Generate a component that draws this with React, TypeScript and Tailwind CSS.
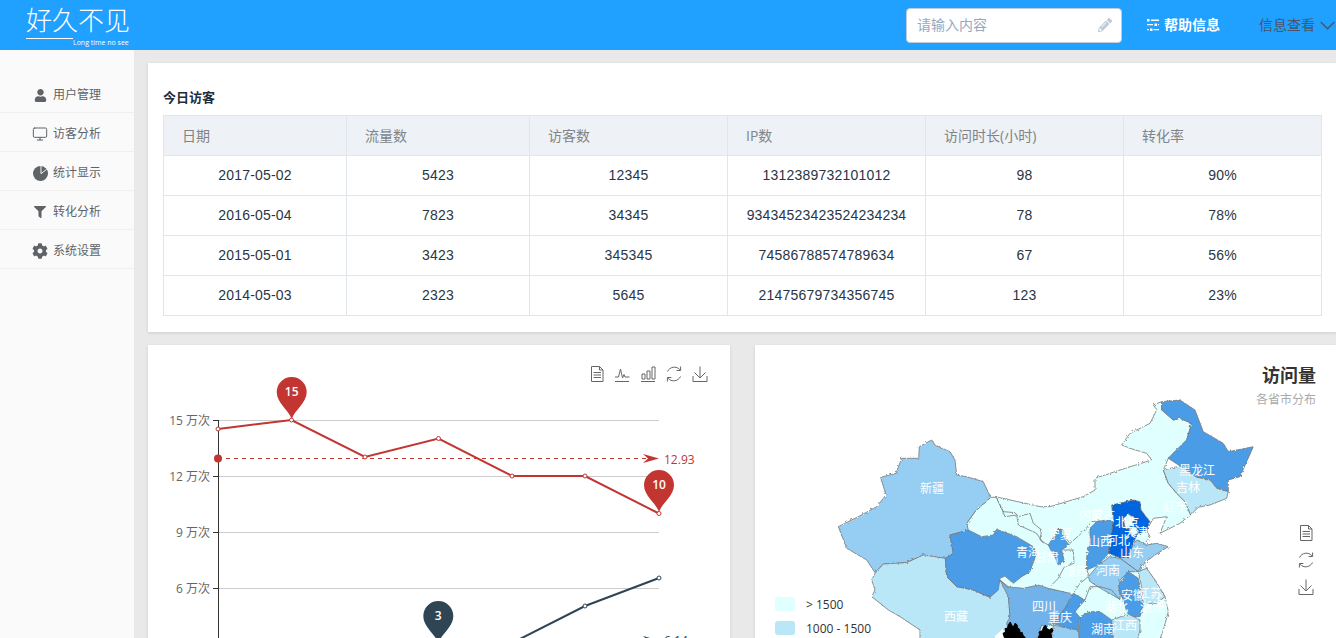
import { FaUser, FaFilter, FaCog, FaPencilAlt } from "react-icons/fa";
import { Monitor } from "lucide-react";

const CJK = "font-['Open_Sans','Noto_Sans_CJK_SC',sans-serif]";

const MENU = [
  { label: "用户管理", icon: <FaUser size={13} /> },
  { label: "访客分析", icon: <Monitor size={16} strokeWidth={1.5} /> },
  {
    label: "统计显示",
    icon: (
      <svg width="15" height="15" viewBox="0 0 16 16">
        <circle cx="8" cy="8" r="8" fill="currentColor" />
        <path d="M8.5 0V8.2L14.5 3.5" fill="none" stroke="#fafafa" strokeWidth="1" />
      </svg>
    ),
  },
  { label: "转化分析", icon: <FaFilter size={12} /> },
  { label: "系统设置", icon: <FaCog size={16} /> },
];

const COLS = [183, 183, 198, 198, 198, 198];
const HEAD = ["日期", "流量数", "访客数", "IP数", "访问时长(小时)", "转化率"];
const ROWS = [
  ["2017-05-02", "5423", "12345", "1312389732101012", "98", "90%"],
  ["2016-05-04", "7823", "34345", "93434523423524234234", "78", "78%"],
  ["2015-05-01", "3423", "345345", "74586788574789634", "67", "56%"],
  ["2014-05-03", "2323", "5645", "21475679734356745", "123", "23%"],
];

function Tool({ kind, x, y }: { kind: string; x: number; y: number }) {
  const c = { fill: "none", stroke: "#666", strokeWidth: 1 };
  return (
    <g transform={`translate(${x - 8} ${y - 8})`} {...c}>
      {kind === "doc" && (
        <>
          <path d="M2.5 0.5h8l3.5 3.5V15.5H2.5z" />
          <path d="M10.5 0.5v3.5H14M4.5 6.5h7.5M4.5 9h7.5M4.5 11.5h7.5" />
        </>
      )}
      {kind === "line" && <path d="M1 15.5h14M1 11h3.5l2-8 2 9 1.5-3.5 1 2.5h4.5" />}
      {kind === "bar" && (
        <path d="M1 15.5h14M2 13V8h3v5zM7 13V5h3v8zM12 13V1h3v12z" />
      )}
      {kind === "refresh" && (
        <>
          <path d="M1.5 5.5A7.5 7.5 0 0 1 14 3.8M14.5 10.5A7.5 7.5 0 0 1 2 12.2" />
          <path d="M14.6 0.5v4h-4M1.4 15.5v-4h4" />
        </>
      )}
      {kind === "save" && (
        <path d="M8 0.5v11.5M2.5 6.5L8 12l5.5-5.5M1 10v5.5h14V10" />
      )}
    </g>
  );
}

function Pin({ x, y, color, label }: { x: number; y: number; color: string; label: string }) {
  return (
    <g>
      <path
        d={`M${x} ${y + 27} C${x - 3} ${y + 18} ${x - 15} ${y + 11} ${x - 15} ${y} A15 15 0 1 1 ${x + 15} ${y} C${x + 15} ${y + 11} ${x + 3} ${y + 18} ${x} ${y + 27}Z`}
        fill={color}
      />
      <text x={x} y={y + 4} textAnchor="middle" fontSize="12" fontWeight="600" fill="#fff">
        {label}
      </text>
    </g>
  );
}

function LineChart() {
  const ys = [420, 476, 532, 588];
  const labels = ["15 万次", "12 万次", "9 万次", "6 万次"];
  const red = [[218, 429], [291.5, 420], [365, 457], [438.5, 438.5], [512, 476], [585, 476], [659, 513.5]];
  const blue = [[438.5, 690], [512, 643], [585, 606], [659, 578]];
  const pts = (a: number[][]) => a.map((p) => p.join(",")).join(" ");
  return (
    <svg width="582" height="400" viewBox="148 345 582 400" className={`block ${CJK}`}>
      {ys.map((y, i) => (
        <g key={y}>
          <line x1="218" x2="659" y1={y + 0.5} y2={y + 0.5} stroke="#ccc" />
          <line x1="213" x2="218" y1={y + 0.5} y2={y + 0.5} stroke="#333" />
          <text x="210" y={y + 5} textAnchor="end" fontSize="12" fill="#666">
            {labels[i]}
          </text>
        </g>
      ))}
      <line x1="218.5" x2="218.5" y1="420" y2="740" stroke="#333" />
      <line x1="218" x2="648" y1="458.5" y2="458.5" stroke="#c23531" strokeDasharray="4 4" />
      <circle cx="218" cy="458.5" r="4" fill="#c23531" />
      <path d="M643 454L659 458.5L643 463L648 458.5Z" fill="#c23531" />
      <text x="664" y="464" fontSize="12" fill="#c23531">12.93</text>
      <polyline points={pts(blue)} fill="none" stroke="#2f4554" strokeWidth="2" />
      <polyline points={pts(red)} fill="none" stroke="#c23531" strokeWidth="2" />
      {red.map((p) => (
        <circle key={p[0]} cx={p[0]} cy={p[1]} r="2" fill="#fff" stroke="#c23531" />
      ))}
      {blue.slice(2).map((p) => (
        <circle key={p[0]} cx={p[0]} cy={p[1]} r="2" fill="#fff" stroke="#2f4554" />
      ))}
      <path d="M643 636L659 640.5L643 645L648 640.5Z" fill="#2f4554" />
      <text x="664" y="645" fontSize="12" fill="#2f4554">6.14</text>
      <Pin x={291.7} y={392} color="#c23531" label="15" />
      <Pin x={659} y={485} color="#c23531" label="10" />
      <Pin x={438.3} y={616} color="#2f4554" label="3" />
      <Tool kind="doc" x={597} y={374} />
      <Tool kind="line" x={622} y={374} />
      <Tool kind="bar" x={648} y={374} />
      <Tool kind="refresh" x={674} y={374} />
      <Tool kind="save" x={700} y={374} />
    </svg>
  );
}

const C0 = "#e0ffff";
const C1 = "#bae7f8";
const C2 = "#95cdf3";
const C3 = "#72b2eb";
const C4 = "#4b9ce6";
const C5 = "#0166df";

const Z6 = [
  { c: C2, p: "515,150 478,170 476,205 425,205 408,250 362,262 378,315 350,350 295,380 235,410 260,475 320,510 345,548 370,522 440,518 490,495 560,505 580,490 570,435 625,420 620,400 645,365 692,322 670,275 620,260 590,255 585,210 570,185 525,165" },
  { c: C1, p: "345,550 370,522 440,518 490,495 556,505 560,560 590,590 640,600 690,622 720,570 745,590 752,720 770,900 480,900 480,720 420,680 385,660 335,620 345,600 335,570" },
  { c: C4, p: "570,435 625,420 665,440 700,435 710,418 770,440 820,470 830,490 810,545 785,560 760,580 735,558 720,565 715,600 690,622 640,600 590,590 560,560 556,505 580,490" },
];

const Z7 = [
  { c: C0, p: "-220,400 -195,365 -148,322 -125,322 0,350 30,350 130,320 165,300 165,265 240,240 335,210 320,190 270,175 245,165 270,130 330,100 350,60 340,45 365,35 365,60 400,90 420,85 455,100 440,150 385,205 370,240 385,280 410,310 435,335 452,375 420,400 360,430 380,380 340,385 320,420 330,440 300,480 320,535 375,620 385,665 370,720 340,800 -200,800" },
  { c: C4, p: "365,35 420,30 465,60 490,125 550,160 565,185 640,170 600,260 565,270 565,305 530,295 510,270 470,262 420,228 385,205 440,150 455,100 420,85 400,90 365,60" },
  { c: C1, p: "370,240 420,228 470,262 510,270 530,295 565,305 560,325 510,345 475,352 452,375 435,335 410,310 385,280" },
  { c: C2, p: "240,505 290,450 320,465 350,460 385,470 345,495 305,525 295,545" },
  { c: C2, p: "145,560 175,525 210,500 240,505 295,545 265,545 240,570 240,628 190,600 150,575" },
  { c: C4, p: "150,415 170,395 210,390 220,395 205,490 175,525 140,540 140,500 150,460" },
  { c: C5, p: "215,345 280,330 300,335 303,360 330,395 320,420 290,435 265,500 240,503 205,490 220,395" },
  { c: C0, p: "250,385 265,372 285,385 280,405 255,415" },
  { c: C0, p: "270,415 290,410 295,430 275,440" },
  { c: C1, p: "295,545 320,535 345,570 375,620 350,640 310,640 305,590" },
  { c: C4, p: "235,585 265,545 295,565 305,620 310,650 300,680 265,680 250,630 240,610" },
  { c: C4, p: "120,680 150,665 180,665 215,690 225,800 115,800" },
  { c: C1, p: "215,690 265,672 300,690 300,720 280,800 225,800" },
];

const Z8 = [
  { c: C3, p: "30,270 50,290 100,295 145,285 175,295 240,310 250,320 225,355 190,400 170,410 155,405 140,460 65,460 50,400 60,380 55,320" },
  { c: C4, p: "250,310 285,330 255,365 268,380 265,420 235,415 190,400 225,355" },
  { c: C2, p: "190,405 235,415 265,420 270,480 180,480" },
  { c: C4, p: "175,165 195,135 205,115 220,120 225,150 238,165 215,180 222,210 205,225 190,195" },
];

const Z8_LINES = [
  "20,25 40,65 75,68 85,80 120,70 130,100 155,120 150,150 175,165",
  "205,115 240,160 280,125 305,95 355,90",
  "220,180 250,180 252,220 222,232 205,265 180,290",
  "290,230 295,260 270,280 250,310",
  "285,330 300,290 330,290 365,300 390,330",
];

const BLOBS = [
  "28,130 28,112 24,100 32,96 30,86 38,84 40,74 46,66 50,76 56,80 60,70 66,74 68,84 74,88 74,96 82,98 84,106 92,114 92,130",
  "128,130 130,112 134,104 132,96 142,92 146,80 152,76 156,86 164,90 170,84 174,92 168,100 170,112 178,130",
];

const MAP_LABELS: [string, number, number][] = [
  ["新疆", 932, 489], ["西藏", 956, 617], ["青海", 1028, 553], ["甘肃", 1047, 558],
  ["四川", 1044, 607], ["重庆", 1060, 618], ["黑龙江", 1197, 471], ["吉林", 1188, 488],
  ["辽宁", 1176, 507], ["内蒙古", 1097, 516], ["北京", 1127, 523], ["天津", 1136, 533],
  ["河北", 1118, 541], ["山西", 1100, 542], ["山东", 1132, 553], ["河南", 1108, 571],
  ["宁夏", 1060, 535], ["陕西", 1076, 572], ["安徽", 1133, 596], ["江苏", 1150, 594],
  ["浙江", 1152, 608], ["上海", 1165, 603], ["湖北", 1116, 608], ["湖南", 1103, 630],
  ["江西", 1125, 626],
];

function MapChart() {
  const shape = { stroke: "#777", strokeWidth: 0.8, vectorEffect: "non-scaling-stroke" as const };
  return (
    <svg width="581" height="400" viewBox="755 345 581 400" className={`block ${CJK}`}>
      <defs>
        <filter id="rough" x="-5%" y="-5%" width="110%" height="110%">
          <feTurbulence type="fractalNoise" baseFrequency="0.4" numOctaves="2" seed="4" />
          <feDisplacementMap in="SourceGraphic" scale="3" />
        </filter>
      </defs>
      <text x="1316" y="382" textAnchor="end" fontSize="18" fontWeight="700" fill="#333">访问量</text>
      <text x="1316" y="404" textAnchor="end" fontSize="12" fill="#aaa">各省市分布</text>
      <g filter="url(#rough)">
        <g transform="translate(1040 390) scale(0.3333)">
          <polygon points={Z7[0].p} fill={Z7[0].c} {...shape} />
        </g>
        <g transform="translate(760 390) scale(0.3333)">
          {Z6.map((s) => <polygon key={s.p} points={s.p} fill={s.c} {...shape} />)}
        </g>
        <g transform="translate(1040 390) scale(0.3333)">
          {Z7.slice(1).map((s) => <polygon key={s.p} points={s.p} fill={s.c} {...shape} />)}
          <polyline points="-130,322 -105,380 -70,375 -65,405 -10,430 10,460" fill="none" {...shape} />
        </g>
        <g transform="translate(990 490) scale(0.3333)">
          {Z8.map((s) => <polygon key={s.p} points={s.p} fill={s.c} {...shape} />)}
          {Z8_LINES.map((l) => <polyline key={l} points={l} fill="none" {...shape} />)}
        </g>
      </g>
      <g transform="translate(995 600) scale(0.3333)">
        <polygon points="0,130 0,108 24,86 34,130" fill="#fff" />
        {BLOBS.map((b) => (
          <polygon key={b} points={b} fill="#000" stroke="#000" strokeWidth="3" />
        ))}
      </g>
      {MAP_LABELS.map(([t, x, y]) => (
        <text key={t} x={x} y={y + 4} textAnchor="middle" fontSize="12" fill="#fff">{t}</text>
      ))}
      <rect x="775" y="597" width="20" height="14" rx="3" fill={C0} />
      <text x="806" y="609" fontSize="12" fill="#333">&gt; 1500</text>
      <rect x="775" y="621" width="20" height="14" rx="3" fill={C1} />
      <text x="806" y="633" fontSize="12" fill="#333">1000 - 1500</text>
      <Tool kind="doc" x={1306} y={533} />
      <Tool kind="refresh" x={1306} y={560} />
      <Tool kind="save" x={1306} y={587} />
    </svg>
  );
}

export default function App() {
  return (
    <div className={`w-[1336px] h-[638px] overflow-hidden flex flex-col ${CJK}`}>
      <header className="h-[50px] shrink-0 bg-[#20a0ff] flex items-center pl-[26px] pr-[1px] text-white">
        <div className="w-[104px] flex flex-col">
          <div className="h-[33px] text-[26px] leading-[33px] font-extralight whitespace-nowrap">好久不见</div>
          <div className="flex items-start h-[9px]">
            <div className="w-[47px] h-px mt-px bg-white" />
            <span className="text-[7px] leading-[9px] mt-[1px] whitespace-nowrap">Long time no see</span>
          </div>
        </div>
        <div className="ml-auto w-[216px] h-[35px] bg-white border border-[#bfcbd9] rounded-[4px] flex items-center justify-between pl-[10px] pr-[9px]">
          <span className="text-sm text-[#97a8be]">请输入内容</span>
          <FaPencilAlt size={14} className="text-[#bfcbd9]" />
        </div>
        <div className="ml-[25px] flex items-center gap-[5px] text-sm font-semibold">
          <svg width="12" height="12" viewBox="0 0 12 12" fill="#fff">
            <path d="M0 0h2.5v2.5H0zM4 .6h8v1.3H4zM0 5h6v1.3H0zM7.5 4.4h2.5v2.5H7.5zM11 5h1v1.3h-1zM0 10h2v1.3H0zM3 9.4h2.5v2.5H3zM6.5 10H12v1.3H6.5z" />
          </svg>
          <span>帮助信息</span>
        </div>
        <div className="ml-[39px] flex items-center gap-[5px] text-sm text-[#48576a]">
          <span>信息查看</span>
          <svg width="15" height="9" viewBox="0 0 15 9" fill="none" stroke="#48576a" strokeWidth="1.4">
            <path d="M0.7 1L7.5 7.8L14.3 1" />
          </svg>
        </div>
      </header>
      <div className="flex flex-1 min-h-0">
        <aside className="w-[134px] shrink-0 bg-[#fafafa] pt-[24px]">
          {MENU.map((m) => (
            <div key={m.label} className="h-[39px] border-b border-[#f0f0f0] flex items-center pt-[4px] text-[#5f6368] text-xs">
              <span className="w-[53px] pl-[31px] pr-[4px] flex justify-center">{m.icon}</span>
              <span>{m.label}</span>
            </div>
          ))}
        </aside>
        <main className="flex-1 bg-[#e9e9e9] pl-[14px] pt-[13px] flex flex-col gap-[13px]">
          <section className="h-[269px] shrink-0 bg-white shadow-[0_1px_3px_rgba(0,0,0,0.12)] px-[15px] pt-[24px]">
            <h2 className="text-[13px] leading-[20px] font-bold text-[#1f2d3d] mb-[8px]">今日访客</h2>
            <table className="table-fixed border-collapse w-[1158px] text-sm">
              <colgroup>
                {COLS.map((w, i) => <col key={i} style={{ width: w }} />)}
              </colgroup>
              <thead>
                <tr className="h-[40px] bg-[#eef1f6]">
                  {HEAD.map((h) => (
                    <th key={h} className="border border-[#dfe6ec] pl-[18px] text-left font-normal text-[#808488]">{h}</th>
                  ))}
                </tr>
              </thead>
              <tbody>
                {ROWS.map((r) => (
                  <tr key={r[0]} className="h-[40px]">
                    {r.map((c, i) => (
                      <td key={i} className="border border-[#dfe6ec] pb-[2px] text-center text-[#2b3544] tracking-[0.2px] font-['Liberation_Sans',sans-serif]">{c}</td>
                    ))}
                  </tr>
                ))}
              </tbody>
            </table>
          </section>
          <div className="flex gap-[25px]">
            <section className="w-[582px] h-[400px] shrink-0 bg-white shadow-[0_1px_3px_rgba(0,0,0,0.12)]">
              <LineChart />
            </section>
            <section className="w-[581px] h-[400px] shrink-0 bg-white shadow-[0_1px_3px_rgba(0,0,0,0.12)]">
              <MapChart />
            </section>
          </div>
        </main>
      </div>
    </div>
  );
}
